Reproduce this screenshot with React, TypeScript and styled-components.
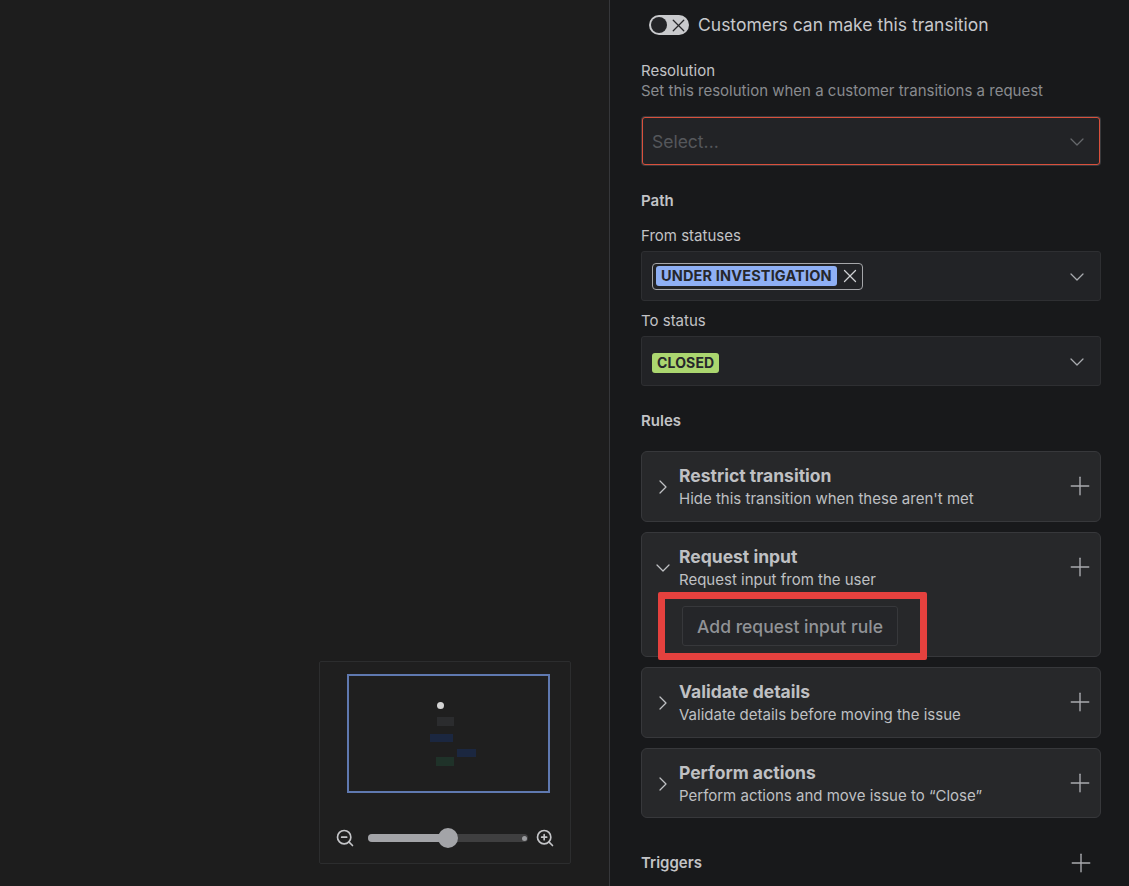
import React from 'react';
import styled, { createGlobalStyle } from 'styled-components';
import { ChevronDown, ChevronRight, Plus, X, ZoomIn, ZoomOut } from 'lucide-react';

const GlobalStyle = createGlobalStyle`
  html, body {
    margin: 0;
    height: 100%;
    background: #1d1d1d;
    overflow: hidden;
  }
  * {
    box-sizing: border-box;
  }
`;

const rules = [
	{ title: 'Restrict transition', sub: "Hide this transition when these aren't met", open: false, height: 71 },
	{ title: 'Request input', sub: 'Request input from the user', open: true, height: 125 },
	{ title: 'Validate details', sub: 'Validate details before moving the issue', open: false, height: 71 },
	{ title: 'Perform actions', sub: 'Perform actions and move issue to “Close”', open: false, height: 70 },
];

const nodes = [
	{ x: 88, y: 41, w: 17, h: 9, color: '#2b2c2e' },
	{ x: 81, y: 58, w: 23, h: 8, color: '#1b2740' },
	{ x: 108, y: 73, w: 19, h: 8, color: '#1b2740' },
	{ x: 87, y: 81, w: 18, h: 9, color: '#1f3229' },
];

const App = () => (
	<Page>
		<GlobalStyle />
		<Canvas>
			<Minimap>
				<Viewport>
					<StartDot />
					{nodes.map(n => (
						<MiniNode
							key={`${n.x}-${n.y}`}
							$color={n.color}
							style={{ left: n.x, top: n.y, width: n.w, height: n.h }}
						/>
					))}
				</Viewport>
				<ZoomRow>
					<ZoomOut size={20} strokeWidth={2} color="#c4c5c8" />
					<SliderTrack>
						<SliderFill />
						<SliderThumb />
						<SliderEnd />
					</SliderTrack>
					<ZoomIn size={20} strokeWidth={2} color="#c4c5c8" />
				</ZoomRow>
			</Minimap>
		</Canvas>
		<Panel>
			<ToggleRow>
				<Toggle>
					<ToggleKnob />
					<X size={21} strokeWidth={1.5} color="#26272a" />
				</Toggle>
				<ToggleLabel>Customers can make this transition</ToggleLabel>
			</ToggleRow>

			<FieldLabel $top={26}>Resolution</FieldLabel>
			<HelpText>Set this resolution when a customer transitions a request</HelpText>
			<SelectBox $height={48} $top={16} $invalid>
				<Placeholder>Select...</Placeholder>
				<SelectChevron size={24} strokeWidth={1.25} color="#66686c" />
			</SelectBox>

			<SectionTitle $top={26}>Path</SectionTitle>
			<FieldLabel $top={15}>From statuses</FieldLabel>
			<SelectBox $height={50} $top={5}>
				<Chip>
					<Lozenge $color="#8fb0f5" $size={14.5}>UNDER INVESTIGATION</Lozenge>
					<X size={22} strokeWidth={1.4} color="#cfd0d3" />
				</Chip>
				<SelectChevron size={24} strokeWidth={1.25} color="#a9abaf" />
			</SelectBox>
			<FieldLabel $top={10}>To status</FieldLabel>
			<SelectBox $height={50} $top={5}>
				<ClosedWrap>
					<Lozenge $color="#abd66f" $size={14}>CLOSED</Lozenge>
				</ClosedWrap>
				<SelectChevron size={24} strokeWidth={1.25} color="#a9abaf" />
			</SelectBox>

			<SectionTitle $top={25}>Rules</SectionTitle>
			<RuleList>
				{rules.map(rule => (
					<RuleCard key={rule.title} $height={rule.height}>
						<RuleHeader>
							<RuleChevron>
								{rule.open
									? <ChevronDown size={24} strokeWidth={1.25} color="#c0c1c4" />
									: <ChevronRight size={24} strokeWidth={1.25} color="#c0c1c4" />}
							</RuleChevron>
							<RuleText>
								<RuleTitle>{rule.title}</RuleTitle>
								<RuleSub>{rule.sub}</RuleSub>
							</RuleText>
							<AddIcon size={30} strokeWidth={1.1} color="#a9abaf" />
						</RuleHeader>
						{rule.open && (
							<RuleBody>
								<AddButton>Add request input rule</AddButton>
								<Highlight />
							</RuleBody>
						)}
					</RuleCard>
				))}
			</RuleList>

			<TriggersRow>
				<TriggersTitle>Triggers</TriggersTitle>
				<Plus size={30} strokeWidth={1.1} color="#a9abaf" />
			</TriggersRow>
		</Panel>
	</Page>
);

const Page = styled.div`
	display: flex;
	width: 1129px;
	height: 886px;
	overflow: hidden;
	font-family: Inter, "Liberation Sans", sans-serif;
`;

const Canvas = styled.div`
	position: relative;
	width: 609px;
	flex: none;
	background: #1d1d1d;
`;

const Minimap = styled.div`
	position: absolute;
	left: 319px;
	top: 661px;
	width: 252px;
	height: 203px;
	background: #1f1f1f;
	border: 1px solid #2c2d2e;
	border-radius: 2px;
`;

const Viewport = styled.div`
	position: absolute;
	left: 27px;
	top: 12px;
	width: 203px;
	height: 119px;
	border: 2px solid #5f79b0;
`;

const StartDot = styled.div`
	position: absolute;
	left: 88px;
	top: 26px;
	width: 7px;
	height: 7px;
	border-radius: 50%;
	background: #d4d4d4;
`;

const MiniNode = styled.div<{ $color: string }>`
	position: absolute;
	background: ${({ $color }) => $color};
`;

const ZoomRow = styled.div`
	position: absolute;
	left: 15px;
	top: 166px;
	width: 220px;
	display: flex;
	align-items: center;
	justify-content: space-between;
`;

const SliderTrack = styled.div`
	position: relative;
	width: 160px;
	height: 8px;
	margin-left: 5px;
	border-radius: 4px;
	background: #3f3f40;
`;

const SliderFill = styled.div`
	width: 80px;
	height: 100%;
	border-radius: 4px 0 0 4px;
	background: #a3a4a8;
`;

const SliderThumb = styled.div`
	position: absolute;
	left: 70px;
	top: -6px;
	width: 20px;
	height: 20px;
	border-radius: 50%;
	background: #a3a4a8;
`;

const SliderEnd = styled.div`
	position: absolute;
	right: 1px;
	top: 1.5px;
	width: 5px;
	height: 5px;
	border-radius: 50%;
	background: #9a9b9e;
`;

const Panel = styled.div`
	flex: 1;
	min-width: 0;
	padding: 15px 28px 0 31px;
	background: #18191b;
	border-left: 1px solid #36373a;
	color: #c7c8cb;
`;

const ToggleRow = styled.div`
	display: flex;
	align-items: center;
	gap: 9px;
	padding-left: 8px;
	height: 20px;
`;

const Toggle = styled.div`
	display: flex;
	align-items: center;
	justify-content: space-between;
	width: 40px;
	height: 20px;
	padding: 0 0 0 2px;
	border-radius: 10px;
	background: #c9cacd;
`;

const ToggleKnob = styled.div`
	width: 16px;
	height: 16px;
	border-radius: 50%;
	background: #232427;
`;

const ToggleLabel = styled.span`
	font-size: 17.5px;
	line-height: 20px;
	color: #c7c8cb;
`;

const FieldLabel = styled.div<{ $top: number }>`
	margin-top: ${({ $top }) => $top}px;
	font-size: 15px;
	line-height: 20px;
	color: #c2c3c6;
`;

const HelpText = styled.div`
	font-size: 15px;
	line-height: 20px;
	color: #898b8f;
`;

const SectionTitle = styled.div<{ $top: number }>`
	margin-top: ${({ $top }) => $top}px;
	font-size: 15px;
	font-weight: 600;
	line-height: 20px;
	color: #c2c3c6;
`;

const SelectBox = styled.div<{ $height: number; $top: number; $invalid?: boolean }>`
	display: flex;
	align-items: center;
	justify-content: space-between;
	height: ${({ $height }) => $height}px;
	margin-top: ${({ $top }) => $top}px;
	margin-inline: ${({ $invalid }) => ($invalid ? '1px' : '0')};
	padding: ${({ $invalid }) => ($invalid ? '1px 10px 0 9px' : '0 11px 0 10px')};
	background: #222326;
	border: 1px solid ${({ $invalid }) => ($invalid ? '#d9503c' : '#2e2f32')};
	border-radius: 3px;
	${({ $invalid }) => $invalid && 'box-shadow: 0 0 0 1px #38393c;'}
`;

const SelectChevron = styled(ChevronDown)`
	margin-top: 1px;
`;

const Placeholder = styled.span`
	font-size: 17.5px;
	color: #55575b;
`;

const Chip = styled.div`
	display: flex;
	align-items: center;
	justify-content: space-between;
	width: 211px;
	height: 27px;
	padding: 0 1px 0 3px;
	border: 1px solid #a5a6a9;
	border-radius: 4px;
`;

const ClosedWrap = styled.div`
	display: flex;
	padding-top: 3px;
`;

const Lozenge = styled.span<{ $color: string; $size: number }>`
	display: inline-block;
	height: 20px;
	padding: 0 5px;
	border-radius: 3px;
	background: ${({ $color }) => $color};
	color: #26272b;
	font-size: ${({ $size }) => $size}px;
	font-weight: 700;
	line-height: 20px;
	letter-spacing: 0.15px;
	white-space: nowrap;
`;

const RuleList = styled.div`
	display: flex;
	flex-direction: column;
	gap: 10px;
	margin-top: 20px;
`;

const RuleCard = styled.div<{ $height: number }>`
	height: ${({ $height }) => $height}px;
	padding: 14px 5px 0 9px;
	background: #27282a;
	border: 1px solid #37383b;
	border-radius: 6px;
`;

const RuleHeader = styled.div`
	display: flex;
	align-items: center;
`;

const RuleChevron = styled.div`
	display: flex;
	justify-content: center;
	width: 24px;
	margin-top: -2px;
	margin-right: 4px;
`;

const RuleText = styled.div`
	flex: 1;
	min-width: 0;
`;

const RuleTitle = styled.div`
	font-size: 17.5px;
	font-weight: 700;
	line-height: 20px;
	color: #bfc0c3;
`;

const RuleSub = styled.div`
	margin-top: 3px;
	font-size: 15px;
	line-height: 20px;
	color: #bfc0c3;
`;

const AddIcon = styled(Plus)`
	margin-top: -3px;
`;

const RuleBody = styled.div`
	position: relative;
	margin-top: 16px;
	margin-left: 31px;
`;

const AddButton = styled.div`
	display: inline-block;
	width: 216px;
	height: 40px;
	background: #252629;
	border: 1px solid #37383b;
	border-radius: 3px;
	font-size: 17.5px;
	font-weight: 500;
	line-height: 40px;
	text-align: center;
	color: #919397;
`;

const Highlight = styled.div`
	position: absolute;
	left: -24px;
	top: -14px;
	width: 269px;
	height: 68px;
	border: 7px solid #e5413e;
	border-radius: 2px;
`;

const TriggersRow = styled.div`
	display: flex;
	align-items: center;
	justify-content: space-between;
	height: 20px;
	margin-top: 35px;
	padding-right: 5px;
`;

const TriggersTitle = styled.span`
	padding-bottom: 2px;
	font-size: 15px;
	font-weight: 600;
	color: #c2c3c6;
`;

export default App;
